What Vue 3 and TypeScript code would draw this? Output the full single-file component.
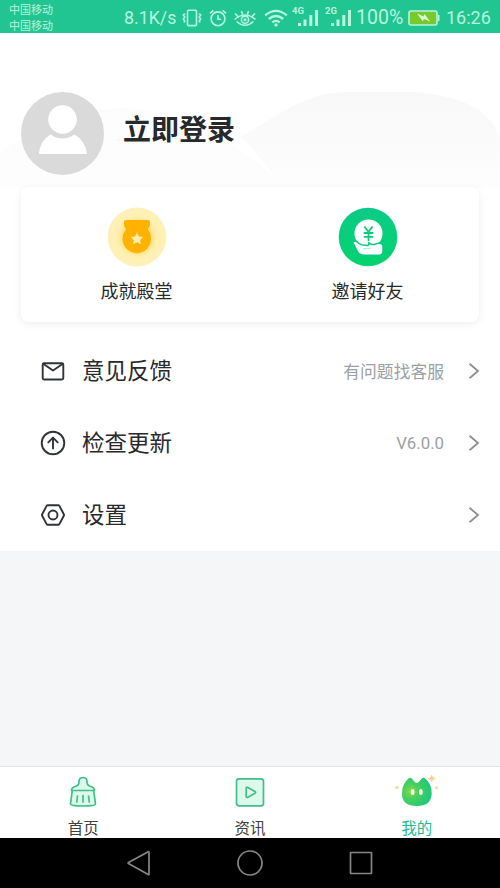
<script setup lang="ts">
interface MenuRow {
  icon: 'mail' | 'update' | 'settings'
  label: string
  note: string
}

const rows: MenuRow[] = [
  { icon: 'mail', label: '意见反馈', note: '有问题找客服' },
  { icon: 'update', label: '检查更新', note: 'V6.0.0' },
  { icon: 'settings', label: '设置', note: '' },
]

const networks: string[] = ['4G', '2G']
</script>

<template>
  <div class="screen">
    <header class="status">
      <div class="carriers"><span>中国移动</span><span>中国移动</span></div>
      <span class="speed">8.1K/s</span>
      <svg class="vibrate" width="20" height="18" viewBox="0 0 20 18">
        <rect x="5.5" y="1.2" width="9" height="15.4" rx="1" />
        <path d="M2.8 4.5 1.3 6l1.5 2-1.5 2 1.5 2-1 1.5M17.2 4.5 18.7 6l-1.5 2 1.5 2-1.5 2 1 1.5" />
      </svg>
      <svg class="alarm" width="18" height="18" viewBox="0 0 18 18">
        <circle cx="9" cy="9.8" r="6.9" />
        <path d="M9 6v4.2h3.2M1 4.4 4.4 1.4M17 4.4l-3.4-3" />
      </svg>
      <svg class="eye" width="24" height="18" viewBox="0 0 24 18">
        <path d="M1.5 10.5Q12 1.5 22.5 10.5M3.5 12.5Q12 20 20.5 12.5M2 4.5l3 3M8.500 2l1 3.200M15.500 2l-1 3.200M22 4.500l-3 3" />
        <circle cx="12" cy="10.700" r="3.600" />
        <circle cx="12" cy="10.700" r=".7" />
      </svg>
      <svg class="wifi" width="24" height="18" viewBox="0 0 24 18">
        <path d="M1.200 6.400Q12-2.600 22.800 6.400M4.800 10Q12 4 19.200 10M8.300 13.400Q12 10.400 15.700 13.400" />
        <circle class="solid" cx="12" cy="15.900" r="1.700" />
      </svg>
      <div v-for="net in networks" :key="net" class="signal">
        <span>{{ net }}</span>
        <svg width="22" height="18" viewBox="0 0 22 18">
          <path class="solid" d="M1 14h3v3H1zM6.500 10.500h3V17h-3zM12.300 6h3v11h-3zM18 1h3v16h-3z" />
        </svg>
      </div>
      <span class="percent">100%</span>
      <svg class="battery" width="32" height="16" viewBox="0 0 32 16">
        <rect class="charge" x="1" y="1" width="28" height="14" rx="2" />
        <path d="M30.700 5v6" />
        <path class="bolt" d="m9 3.500 6.500 3 1-2.500L22 11.500l-6-2.500-1.200 2.200z" />
      </svg>
      <span class="clock">16:26</span>
    </header>

    <main class="profile">
      <svg class="hills" width="500" height="155" viewBox="0 0 500 155">
        <defs>
          <linearGradient id="hillFront" x1="0" y1="0" x2="0" y2="1">
            <stop offset="0" stop-color="#f8f8f8" /><stop offset="1" stop-color="#fdfdfd" />
          </linearGradient>
          <linearGradient id="hillBack" x1="0" y1="0" x2="0" y2="1">
            <stop offset="0" stop-color="#fcfcfc" /><stop offset="1" stop-color="#fdfdfd" />
          </linearGradient>
        </defs>
        <path d="M0 119Q65 74 124 75Q205 76 285 155H0z" fill="url(#hillBack)" />
        <path d="M240 104C285 79 305 59 350 59H415C470 64 490 80 500 104V155H282Q255 115 240 104z" fill="url(#hillFront)" />
      </svg>

      <section class="login">
        <svg class="avatar" width="83" height="83" viewBox="0 0 83 83">
          <circle cx="41.500" cy="41.500" r="41.500" fill="#dadada" />
          <circle cx="41.500" cy="27.500" r="14.300" fill="#fff" />
          <path d="M17.800 62Q19 48.500 29.500 42.500Q41.500 50.500 53.500 42.500Q64.500 48.500 66 62z" fill="#fff" />
        </svg>
        <h1>立即登录</h1>
      </section>

      <section class="card">
        <div class="feature">
          <svg width="60" height="60" viewBox="0 0 60 60">
            <defs>
              <radialGradient id="halo">
                <stop offset=".45" stop-color="#ffe184" /><stop offset=".72" stop-color="#fff0b3" />
                <stop offset="1" stop-color="#fdf1ba" />
              </radialGradient>
            </defs>
            <circle cx="30" cy="30" r="29.500" fill="url(#halo)" />
            <path d="M19 13h22q2 0 2 2v3q0 1.500-2.300 4.300Q44 26 44 32a14.200 14.200 0 0 1-28.400 0q0-6 3.600-9.700Q17 19.500 17 18v-3q0-2 2-2z" fill="#ffb300" />
            <path d="m30 25.500 1.900 3.900 4.300.6-3.100 3 .8 4.300-3.900-2.100-3.900 2.100.8-4.300-3.100-3 4.300-.6z" fill="#ffefb0" />
          </svg>
          <span>成就殿堂</span>
        </div>
        <div class="feature">
          <svg width="60" height="60" viewBox="0 0 60 60">
            <defs>
              <linearGradient id="coin" x1="0" y1="0" x2="0" y2="1">
                <stop offset="0" stop-color="#0bcb87" /><stop offset="1" stop-color="#03d36e" />
              </linearGradient>
            </defs>
            <circle cx="30" cy="30" r="29.300" fill="url(#coin)" />
            <circle cx="30.500" cy="26.500" r="14" fill="#fff" />
            <path d="m26.500 19.500 4 5.500 4-5.500M30.500 25v9M25.700 26h9.600M25.700 29.800h9.600" fill="none" stroke="#08cb7b" stroke-width="1.800" />
            <path d="M14.500 35.500C16.500 33 19 34.500 21 36.500C24 39 27 38 30 38.500C31.500 37 31 36.500 30.500 35.500C33 38.500 35 38 37.500 37C40.500 35.500 45 36 45 39V44.500Q45 48.300 41 48.300H26C18.500 48.300 19 41.500 14.500 35.500Z" fill="#fff" stroke="#08cb7b" stroke-width="1.500" stroke-linejoin="round" />
            <path d="M25.500 41.300C29 42.300 32 42.300 33.500 40" fill="none" stroke="#76dfb1" stroke-width=".7" />
          </svg>
          <span>邀请好友</span>
        </div>
      </section>

      <nav class="menu">
        <div v-for="row in rows" :key="row.icon" class="row">
          <svg class="row-icon" width="26" height="26" viewBox="0 0 26 26">
            <template v-if="row.icon === 'mail'">
              <rect x="2.700" y="5.200" width="20.600" height="16.300" rx="1.500" />
              <path d="m3.500 6 9.500 6.500L22.500 6" />
            </template>
            <template v-else-if="row.icon === 'update'">
              <circle cx="13" cy="13" r="11.300" />
              <path d="M13 18.500V8M8.300 12.300 13 7.600l4.700 4.700" />
            </template>
            <template v-else>
              <path d="M7.800 3.200h10.400q.8 0 1.200.7l4.400 8.300q.4.800 0 1.600l-4.400 8.300q-.4.700-1.200.7H7.800q-.8 0-1.200-.7L2.200 13.800q-.4-.8 0-1.600L6.600 3.900q.4-.7 1.200-.7z" />
              <circle cx="13" cy="13" r="4.500" />
            </template>
          </svg>
          <span class="label">{{ row.label }}</span>
          <span class="note">{{ row.note }}</span>
          <svg class="chevron" width="12" height="18" viewBox="0 0 12 18"><path d="m1.500 1.800 8.500 7.200-8.500 7.200" /></svg>
        </div>
      </nav>
    </main>

    <footer class="tabs">
      <div class="tab">
        <svg class="tab-icon" width="46" height="34" viewBox="0 0 46 34">
          <path d="M11.500 15.500q0-2.500 2.500-3.500 5-1.500 5-4.500V6q.3-3.500 4-3.500t4 3.500v1.500q0 3 5 4.500 2.500 1 2.500 3.500zM12.300 15.500 10.500 29q0 2 12.500 2t12.500-2l-1.800-13.500z" />
          <path d="m17.500 21-.7 6M23 20.500v6.500M28.500 21l.7 6" />
        </svg>
        <span>首页</span>
      </div>
      <div class="tab">
        <svg class="tab-icon" width="46" height="34" viewBox="0 0 46 34">
          <rect x="9.500" y="3.800" width="27" height="27" rx="2.500" />
          <path d="M19.200 13.300q0-1.700 1.600-.9l7.200 4q1.400.9 0 1.800l-7.200 4q-1.600.8-1.600-.9z" />
        </svg>
        <span>资讯</span>
      </div>
      <div class="tab active">
        <svg width="46" height="34" viewBox="0 0 46 34">
          <defs>
            <radialGradient id="cat" cx=".3" cy=".48" r=".65">
              <stop offset="0" stop-color="#8cdb43" /><stop offset=".4" stop-color="#48cf60" />
              <stop offset="1" stop-color="#21c978" />
            </radialGradient>
          </defs>
          <path d="M8 19Q8 8.500 14.500 3.500Q16.500 1.800 18.300 4L21 7.200q1.700 1 3.400 0L27.300 4q1.900-2.300 3.900-.6Q37.700 8.500 37.700 18.500 37.500 31 22.800 31T8 19z" fill="url(#cat)" />
          <rect x="16.800" y="14" width="3.600" height="6" rx="1.800" fill="#f4ffe7" />
          <rect x="25" y="14" width="3.600" height="6" rx="1.800" fill="#f4ffe7" />
          <path d="m37.700 0 1.100 2.400 2.500 1.100-2.500 1.100-1.100 2.500-1.100-2.500-2.500-1.100 2.500-1.100z" fill="#f5d184" stroke="#f5d184" stroke-width=".5" />
          <circle cx="3" cy="12.500" r="1.800" fill="#f9dda0" />
          <circle cx="42.500" cy="12.800" r="1.600" fill="#f9dda0" />
        </svg>
        <span>我的</span>
      </div>
    </footer>

    <div class="system">
      <svg width="26" height="28" viewBox="0 0 26 28"><path d="M23 3.200v22q0 .8-.8.400L2.500 14.500q-.7-.5 0-1L22.200 2.800q.8-.4.800.4z" /></svg>
      <svg width="28" height="28" viewBox="0 0 28 28"><circle cx="14" cy="14" r="12" /></svg>
      <svg width="26" height="28" viewBox="0 0 26 28"><rect x="2.500" y="3.500" width="21" height="21" rx=".5" /></svg>
    </div>
  </div>
</template>

<style>
body {
  margin: 0;
}
</style>

<style scoped>
.screen {
  display: flex;
  flex-direction: column;
  width: 500px;
  height: 888px;
  overflow: hidden;
  background: #f5f6f8;
  color: #28292b;
  font-family: Roboto, "Noto Sans CJK SC", sans-serif;
}
svg {
  display: block;
  flex: none;
}
.status {
  display: flex;
  flex: none;
  align-items: center;
  box-sizing: border-box;
  height: 33px;
  padding: 2px 0 0 9px;
  background: #20c591;
  color: #b9f4df;
  white-space: nowrap;
}
.status svg {
  fill: none;
  stroke: #b9f4df;
  stroke-width: 1.6;
}
.status svg .solid {
  fill: #b9f4df;
  stroke: none;
}
.carriers {
  display: flex;
  flex-direction: column;
  width: 115px;
  padding-top: 2px;
  font-size: 11px;
  line-height: 16px;
}
.speed {
  width: 58px;
  font-size: 17.8px;
}
.vibrate {
  margin-left: 0;
}
.alarm {
  margin-left: 7px;
}
.eye {
  margin-left: 6px;
}
.wifi {
  margin-left: 7px;
}
.status .wifi {
  stroke-width: 2.3;
}
.signal {
  display: flex;
  width: 27px;
  margin-left: 4px;
}
.signal + .signal {
  margin-left: 6px;
}
.signal span {
  width: 13px;
  margin-right: -7px;
  font-size: 9.5px;
  font-weight: 700;
  line-height: 9px;
  transform: translateY(-3px);
}
.percent {
  width: 48px;
  margin-left: 4px;
  font-size: 19.5px;
}
.battery {
  margin-left: 4px;
}
.status .charge {
  fill: #77c92e;
}
.status .bolt {
  fill: #dcfbd3;
  stroke: none;
}
.clock {
  margin-left: 6px;
  font-size: 18px;
}
.profile {
  position: relative;
  flex: none;
  box-sizing: border-box;
  height: 518px;
  padding: 59px 21px 0;
  background: #fff;
}
.hills {
  position: absolute;
  top: 0;
  left: 0;
}
.login {
  position: relative;
  display: flex;
  align-items: center;
  height: 83px;
}
h1 {
  margin: 0 0 5px 19px;
  font-size: 28px;
  font-weight: 700;
  line-height: 40px;
}
.card {
  position: relative;
  display: grid;
  grid-template-columns: 231px 231px;
  box-sizing: border-box;
  height: 135px;
  margin-top: 12px;
  padding-top: 20px;
  border-radius: 8px;
  background: #fff;
  box-shadow: 0 2px 9px rgb(0 0 0 / 7%);
}
.feature {
  display: flex;
  flex-direction: column;
  align-items: center;
  gap: 11px;
  font-size: 18px;
  line-height: 28px;
}
.menu {
  padding-top: 13px;
}
.row {
  display: flex;
  align-items: center;
  height: 72px;
  padding: 0 0 0 19px;
}
.row-icon {
  fill: none;
  stroke: #303337;
  stroke-width: 1.9;
  stroke-linecap: round;
  stroke-linejoin: round;
}
.label {
  margin: 0 0 4px 16px;
  font-size: 22.5px;
}
.note {
  margin-right: -1px;
  margin-left: auto;
  color: #9a9fa5;
  font-size: 16.8px;
}
.chevron {
  margin-right: -1px;
  margin-left: 25px;
  fill: none;
  stroke: #8e8f92;
  stroke-width: 1.8;
}
.tabs {
  display: grid;
  flex: none;
  grid-template-columns: repeat(3, 1fr);
  box-sizing: border-box;
  height: 72px;
  margin-top: auto;
  padding-top: 8px;
  border-top: 1px solid #e1e3e5;
  background: #fff;
}
.tab {
  display: flex;
  flex-direction: column;
  align-items: center;
  gap: 9px;
  color: #404142;
  font-size: 15.5px;
  line-height: 22px;
}
.active {
  color: #24b990;
}
.tab-icon {
  fill: #dcf9eb;
  stroke: #42bd8c;
  stroke-width: 1.7;
  stroke-linecap: round;
  stroke-linejoin: round;
}
.system {
  display: flex;
  flex: none;
  align-items: center;
  justify-content: space-between;
  box-sizing: border-box;
  height: 50px;
  padding: 0 126px;
  background: #000;
}
.system svg {
  fill: none;
  stroke: #858585;
  stroke-width: 1.7;
}
</style>
